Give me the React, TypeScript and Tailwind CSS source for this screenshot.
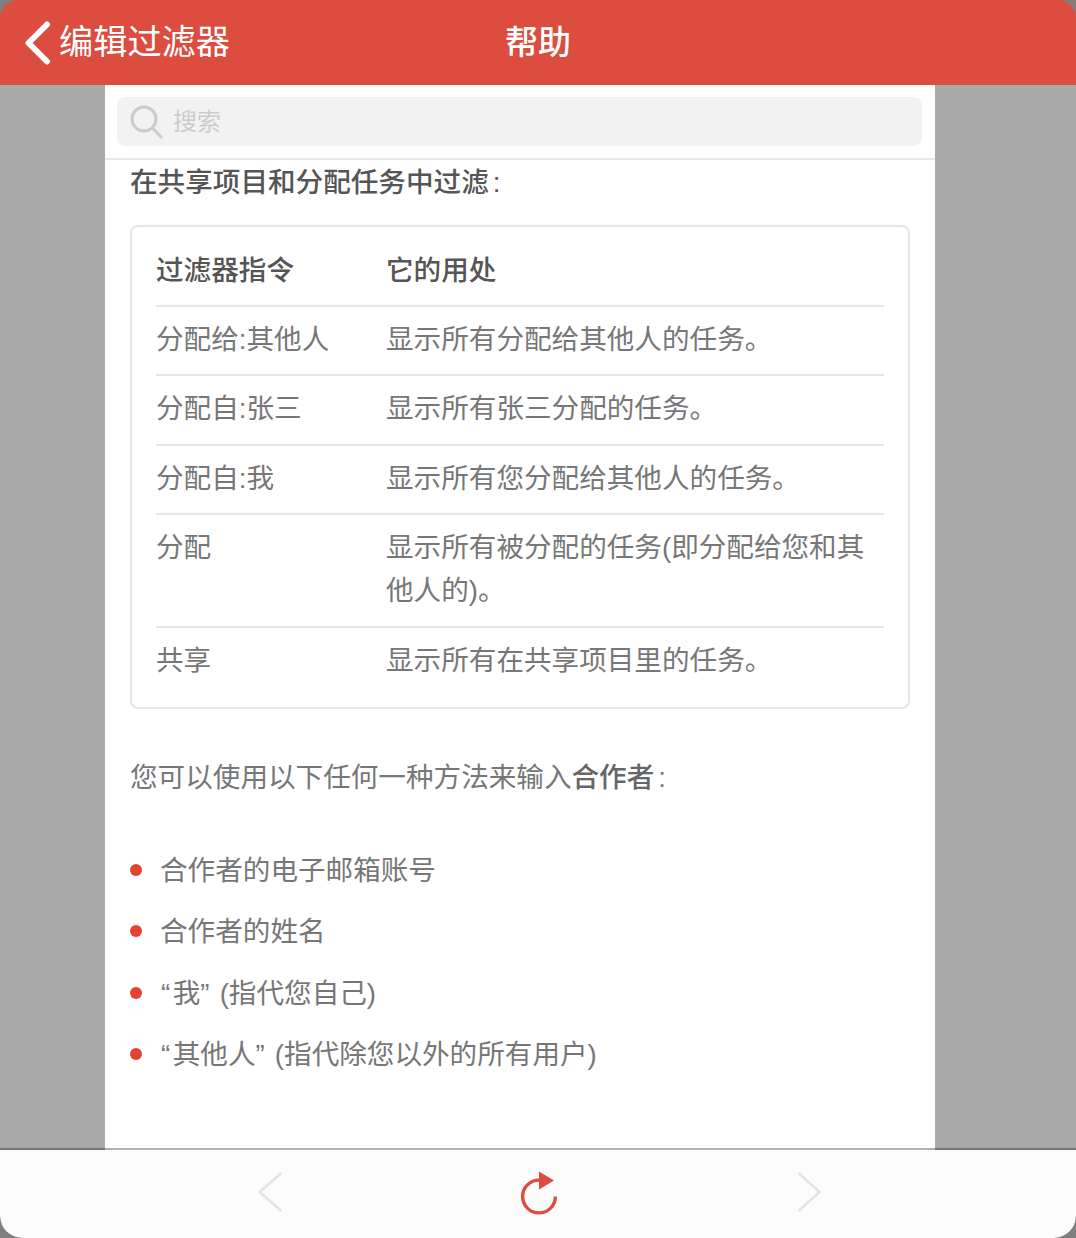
import type { ReactNode } from "react";

const font = { fontFamily: '"Liberation Sans", "Noto Sans CJK SC", sans-serif' };

const rows = [
  { cmd: "分配给:其他人", desc: "显示所有分配给其他人的任务。" },
  { cmd: "分配自:张三", desc: "显示所有张三分配的任务。" },
  { cmd: "分配自:我", desc: "显示所有您分配给其他人的任务。" },
  { cmd: "分配", desc: "显示所有被分配的任务(即分配给您和其他人的)。" },
  { cmd: "共享", desc: "显示所有在共享项目里的任务。" },
];

const Q = ({ children }: { children: ReactNode }) => <span className="tracking-[2.5px]">{children}</span>;

const items: ReactNode[] = [
  "合作者的电子邮箱账号",
  "合作者的姓名",
  <span key="me" className="whitespace-pre ml-[1px]"><Q>“</Q>我<Q>”</Q> (指代您自己)</span>,
  <span key="others" className="whitespace-pre ml-[1px]"><Q>“</Q>其他人<Q>”</Q> (指代除您以外的所有用户)</span>,
];

export default function App() {
  return (
    <div style={font} className="h-[1238px] w-[1076px] flex flex-col bg-[#7f7f7f] overflow-hidden">
      {/* Header */}
      <header className="h-[85px] shrink-0 bg-[#dc4c3f] rounded-t-[18px] grid grid-cols-[1fr_auto_1fr] items-center text-white px-[24px]">
        <div className="flex items-center gap-[8px]">
          <svg width="27" height="44" viewBox="0 0 27 44" fill="none">
            <path d="M23 3.5 L4.5 22 L23 40.5" stroke="white" strokeWidth="6" strokeLinecap="round" strokeLinejoin="round" />
          </svg>
          <span className="text-[34.2px] leading-none">编辑过滤器</span>
        </div>
        <h1 className="text-[33px] leading-none font-medium">帮助</h1>
        <div />
      </header>

      {/* Page */}
      <div className="flex-1 min-h-0 bg-[#a9a9a9] overflow-hidden">
        <div className="ml-[105px] w-[830px] h-full bg-white">
          <div className="h-[75px] px-[12px] pt-[12px] border-b-2 border-[#e8e8e8]">
            <div className="h-[49px] w-[805px] bg-[#f2f2f2] rounded-[8px] flex items-center pl-[13px] gap-[10px]">
              <svg width="33" height="34" viewBox="0 0 33 34" fill="none" stroke="#cbcbcb" strokeWidth="3">
                <circle cx="14" cy="14" r="12" />
                <path d="M22.5 23 L31 32" strokeLinecap="round" />
              </svg>
              <span className="text-[24px] leading-none text-[#cccccc]">搜索</span>
            </div>
          </div>

          <div className="px-[25px]">
            <h2 className="pt-[3px] text-[27.6px] leading-[40px] font-medium text-[#555555]">
              在共享项目和分配任务中过滤<span className="ml-[4px]">:</span>
            </h2>

            <div className="mt-[22px] w-[780px] h-[484px] border-2 border-[#e6e6e6] rounded-[8px] px-[24px]">
              <div className="h-[80px] pt-[10px] flex items-center border-b-2 border-[#e6e6e6] text-[27.6px] font-medium text-[#555555]">
                <div className="w-[231px]">过滤器指令</div>
                <div className="-ml-[1px]">它的用处</div>
              </div>
              {rows.map((r, i) => (
                <div
                  key={r.cmd}
                  className={`flex text-[27.6px] leading-[43px] text-[#777777] pt-[11px] pb-[13.4px] ${i < rows.length - 1 ? "border-b-2 border-[#e6e6e6]" : ""}`}
                >
                  <div className="w-[231px] shrink-0">{r.cmd}</div>
                  <div className="flex-1 -ml-[1px]">{r.desc}</div>
                </div>
              ))}
            </div>

            <p className="mt-[48px] text-[27.6px] leading-[42px] text-[#777777]">
              您可以使用以下任何一种方法来输入<b className="font-medium text-[#666666]">合作者</b><span className="ml-[4px]">:</span>
            </p>

            <ul className="mt-[51px] flex flex-col gap-[19.3px]">
              {items.map((t, i) => (
                <li key={i} className="flex items-center text-[27.6px] leading-[42px] text-[#777777]">
                  <span className="w-[12px] h-[12px] rounded-full bg-[#e44332] mr-[18px] shrink-0 -translate-y-[1px]" />
                  {t}
                </li>
              ))}
            </ul>
          </div>
        </div>
      </div>

      {/* Toolbar */}
      <footer className="relative -mt-[2px] h-[90px] shrink-0 bg-[#fcfcfc] bg-clip-padding border-t-2 border-black/30 rounded-b-[22px] flex items-center justify-center gap-[238px] pb-[5px] pl-[2px]">
        <svg width="26" height="42" viewBox="0 0 26 42" fill="none" stroke="#e3e3e3" strokeWidth="2.5">
          <path d="M25.4 2 L3.6 21 L25.4 40" />
        </svg>
        <svg width="38" height="46" viewBox="0 -2.5 38 46" fill="none">
          <path d="M35.4 25 A16.4 16.4 0 1 1 19 8.6" stroke="#dc4c3f" strokeWidth="3.4" />
          <path d="M19 0 L34 9 L19 18 Z" fill="#dc4c3f" />
        </svg>
        <svg width="26" height="42" viewBox="0 0 26 42" fill="none" stroke="#e3e3e3" strokeWidth="2.5">
          <path d="M2.5 2 L23.5 21 L2.5 40" />
        </svg>
      </footer>
    </div>
  );
}
